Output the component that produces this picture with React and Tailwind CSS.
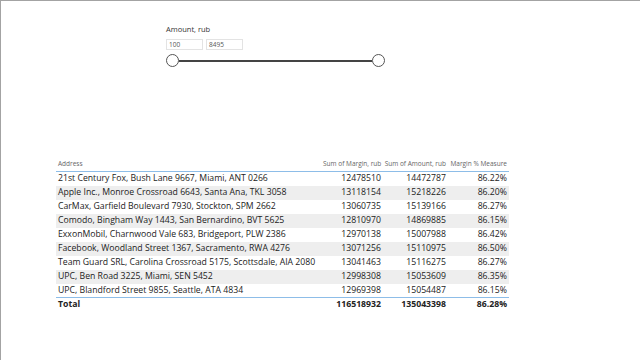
import React from 'react';

const rows = [
  ['21st Century Fox, Bush Lane 9667, Miami, ANT 0266', '12478510', '14472787', '86.22%'],
  ['Apple Inc., Monroe Crossroad 6643, Santa Ana, TKL 3058', '13118154', '15218226', '86.20%'],
  ['CarMax, Garfield Boulevard 7930, Stockton, SPM 2662', '13060735', '15139166', '86.27%'],
  ['Comodo, Bingham Way 1443, San Bernardino, BVT 5625', '12810970', '14869885', '86.15%'],
  ['ExxonMobil, Charnwood Vale 683, Bridgeport, PLW 2386', '12970138', '15007988', '86.42%'],
  ['Facebook, Woodland Street 1367, Sacramento, RWA 4276', '13071256', '15110975', '86.50%'],
  ['Team Guard SRL, Carolina Crossroad 5175, Scottsdale, AIA 2080', '13041463', '15116275', '86.27%'],
  ['UPC, Ben Road 3225, Miami, SEN 5452', '12998308', '15053609', '86.35%'],
  ['UPC, Blandford Street 9855, Seattle, ATA 4834', '12969398', '15054487', '86.15%'],
];

const cols = 'grid grid-cols-[267px_61px_65px_60px]';

const App = () => {
  return (
    <div
      className="w-[640px] h-[360px] bg-white border-t border-l border-[#a3a3a3] overflow-hidden"
      style={{ fontFamily: '"Open Sans", "Noto Sans", sans-serif' }}
    >
      {/* Amount slicer */}
      <div className="pl-[165px] pt-[23px]">
        <div className="text-[7.5px] leading-[10px] text-[#333]">Amount, rub</div>
        <div className="flex gap-[3px] mt-[5px]">
          <div className="w-[37px] h-[11px] border border-[#e3e3e3] text-[6.5px] leading-[9px] text-[#555] pl-[2px]">100</div>
          <div className="w-[37px] h-[11px] border border-[#e3e3e3] text-[6.5px] leading-[9px] text-[#555] pl-[2px]">8495</div>
        </div>
        <div className="flex items-center w-[220px] mt-[4px] h-[13px]">
          <div className="w-[13px] h-[13px] rounded-full border-[1.5px] border-[#555] bg-white shrink-0" />
          <div className="w-[193px] h-[2px] bg-[#444]" />
          <div className="w-[13px] h-[13px] rounded-full border-[1.5px] border-[#555] bg-white shrink-0" />
        </div>
      </div>

      {/* Table */}
      <div className="ml-[55px] mt-[90px] w-[453px]">
        <div className={`${cols} h-[15px] items-center border-b border-[#8dbde8] text-[6.5px] text-[#666] whitespace-nowrap`}>
          <div className="pl-[2px]">Address</div>
          <div className="text-right pr-[3px]">Sum of Margin, rub</div>
          <div className="text-right pr-[3px]">Sum of Amount, rub</div>
          <div className="text-right pr-[2px]">Margin % Measure</div>
        </div>
        {rows.map((r, i) => (
          <div
            key={i}
            className={`${cols} h-[14px] items-center text-[8.7px] text-[#222] whitespace-nowrap ${i % 2 === 1 ? 'bg-[#eeeeee]' : 'bg-white'} ${i === rows.length - 1 ? 'border-b border-[#8dbde8]' : ''}`}
          >
            <div className="pl-[2px]">{r[0]}</div>
            <div className="text-right pr-[3px]">{r[1]}</div>
            <div className="text-right pr-[3px]">{r[2]}</div>
            <div className="text-right pr-[2px]">{r[3]}</div>
          </div>
        ))}
        <div className={`${cols} h-[14px] items-center text-[8.7px] font-bold text-[#222]`}>
          <div className="pl-[2px]">Total</div>
          <div className="text-right pr-[3px]">116518932</div>
          <div className="text-right pr-[3px]">135043398</div>
          <div className="text-right pr-[2px]">86.28%</div>
        </div>
      </div>
    </div>
  );
};

export default App;
